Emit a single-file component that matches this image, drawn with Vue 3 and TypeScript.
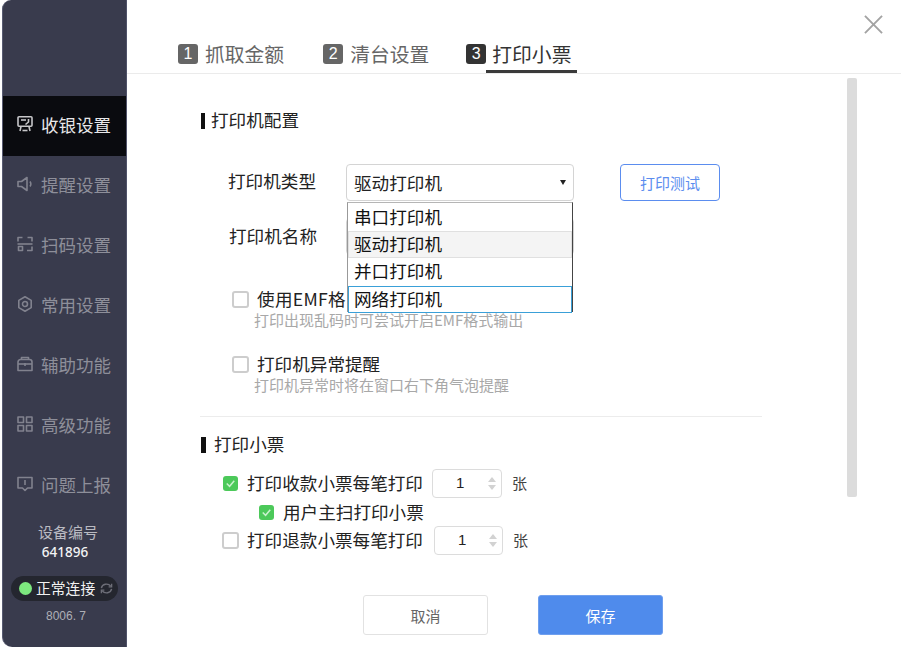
<template>
  <div class="window">
    <aside class="sidebar">
      <nav class="nav">
        <div
          v-for="item in navItems"
          :key="item.label"
          class="nav__item"
          :class="{ 'nav__item--active': item.active }">
          <svg class="nav__icon" viewBox="0 0 18 18" fill="none" stroke="currentColor" stroke-width="1.6" stroke-linejoin="round">
            <path v-for="d in item.paths" :key="d" :d="d" />
          </svg>
          <span>{{ item.label }}</span>
        </div>
      </nav>
      <div class="device">
        <div class="device__label">设备编号</div>
        <div class="device__code">641896</div>
        <div class="status">
          <span class="status__dot" />
          <span class="status__text">正常连接</span>
          <svg class="status__icon" viewBox="0 0 14 14" fill="none" stroke="currentColor" stroke-width="1.5">
            <path d="M1.500 6.500A5.500 5 0 0 1 11.500 4.500" />
            <path d="M12.500 2v3.200H9.300" />
            <path d="M12.500 7.500A5.500 5 0 0 1 2.500 9.500" />
            <path d="M1.500 12V8.800h3.200" />
          </svg>
        </div>
        <div class="device__version">8006. 7</div>
      </div>
    </aside>

    <main class="main">
      <svg class="close" viewBox="0 0 20 20" stroke="#a3a3a3" stroke-width="2" fill="none">
        <path d="M1 1l18 18M19 1L1 19" />
      </svg>

      <header class="tabs">
        <div
          v-for="tab in tabs"
          :key="tab.num"
          class="tab"
          :class="{ 'tab--active': tab.active }">
          <span class="tab__num">{{ tab.num }}</span>
          <span class="tab__text">{{ tab.label }}</span>
        </div>
      </header>

      <div class="thumb" />

      <section class="content">
        <h2 class="title">打印机配置</h2>

        <div class="field field--type">
          <label class="field__label">打印机类型</label>
          <div class="select">
            <span>驱动打印机</span>
            <span class="select__arrow" />
            <ul class="dropdown">
              <li
                v-for="opt in options"
                :key="opt.label"
                class="dropdown__opt"
                :class="{
                  'dropdown__opt--selected': opt.selected,
                  'dropdown__opt--focus': opt.focus,
                }">
                {{ opt.label }}
              </li>
            </ul>
          </div>
          <button class="btn-test">打印测试</button>
        </div>

        <div class="field field--name">
          <label class="field__label">打印机名称</label>
          <div class="select select--name" />
        </div>

        <div class="option option--emf">
          <span class="check" />
          <span class="option__text option__text--emf">使用EMF格</span>
        </div>
        <p class="hint">打印出现乱码时可尝试开启EMF格式输出</p>

        <div class="option option--warn">
          <span class="check" />
          <span class="option__text">打印机异常提醒</span>
        </div>
        <p class="hint">打印机异常时将在窗口右下角气泡提醒</p>

        <div class="divider" />

        <h2 class="title title--second">打印小票</h2>

        <div class="ticket ticket--first">
          <span class="check check--on">
            <svg viewBox="0 0 16 16" fill="none" stroke="#c9f2cd" stroke-width="1.6"><path d="M4 8l3 3 5-6" /></svg>
          </span>
          <span class="option__text">打印收款小票每笔打印</span>
          <span class="stepper">
            <span class="stepper__val">1</span>
            <span class="stepper__arrows"><i class="up" /><i class="down" /></span>
          </span>
          <span class="ticket__unit">张</span>
        </div>
        <div class="ticket ticket--sub">
          <span class="check check--on">
            <svg viewBox="0 0 16 16" fill="none" stroke="#c9f2cd" stroke-width="1.6"><path d="M4 8l3 3 5-6" /></svg>
          </span>
          <span class="option__text">用户主扫打印小票</span>
        </div>
        <div class="ticket ticket--last">
          <span class="check" />
          <span class="option__text">打印退款小票每笔打印</span>
          <span class="stepper">
            <span class="stepper__val">1</span>
            <span class="stepper__arrows"><i class="up" /><i class="down" /></span>
          </span>
          <span class="ticket__unit">张</span>
        </div>
      </section>

      <footer class="footer">
        <button class="btn btn--cancel">取消</button>
        <button class="btn btn--save">保存</button>
      </footer>
    </main>
  </div>
</template>

<script setup lang="ts">
interface NavItem {
  label: string;
  paths: string[];
  active?: boolean;
}

const navItems: NavItem[] = [
  {
    label: "收银设置",
    active: true,
    paths: [
      "M3 1.800h12a1 1 0 0 1 1 1v7.400a1 1 0 0 1-1 1H3a1 1 0 0 1-1-1V2.800a1 1 0 0 1 1-1z",
      "M5 11.500l-1 4.500",
      "M13 11.500l1 4.500",
      "M6.500 15.500h5",
      "M5 5h5",
      "M12.500 4v3l-3 2.500",
    ],
  },
  {
    label: "提醒设置",
    paths: ["M2 6.500h3.500L11 2.500v13l-5.500-4H2z", "M14 6.500c1 1.500 1 3.500 0 5"],
  },
  {
    label: "扫码设置",
    paths: [
      "M2 6.500V2.500h4.500",
      "M11.500 2.500H16v4",
      "M1.500 9h15",
      "M2.500 11.500h4v4h-4z",
      "M16 11.500v4h-5",
    ],
  },
  {
    label: "常用设置",
    paths: [
      "M9 1.800l6.200 3.600v7.200L9 16.200l-6.200-3.600V5.400z",
      "M9 6.500a2.500 2.500 0 1 0 0 5 2.500 2.500 0 0 0 0-5z",
    ],
  },
  {
    label: "辅助功能",
    paths: [
      "M2 7a2.500 2.500 0 0 1 2.500-2.500h9A2.500 2.500 0 0 1 16 7v8.500H2z",
      "M5.500 4.500V2.500h7v2",
      "M2 9h14",
      "M9 8v3",
    ],
  },
  {
    label: "高级功能",
    paths: ["M2 2h5.500v5.500H2z", "M10.500 2H16v5.500h-5.500z", "M2 10.500h5.500V16H2z", "M10.500 10.500H16V16h-5.500z"],
  },
  {
    label: "问题上报",
    paths: ["M2 2.500h14v10.500h-4.500L9 15.500 6.500 13H2z", "M9 5v5"],
  },
];

const tabs = [
  { num: 1, label: "抓取金额" },
  { num: 2, label: "清台设置" },
  { num: 3, label: "打印小票", active: true },
];

const options = [
  { label: "串口打印机" },
  { label: "驱动打印机", selected: true },
  { label: "并口打印机" },
  { label: "网络打印机", focus: true },
];
</script>

<style>
html,
body {
  margin: 0;
  background: #fff;
}
</style>

<style scoped>
.window {
  display: flex;
  width: 901px;
  height: 647px;
  overflow: hidden;
  font-family: "Noto Sans CJK SC", "Liberation Sans", sans-serif;
  color: #222;
  background: #fff;
}

.sidebar {
  flex: none;
  display: flex;
  flex-direction: column;
  box-sizing: border-box;
  width: 125px;
  margin-left: 2px;
  padding: 96px 0 0;
  background: #393b4d;
  border-left: 1px solid #585b72;
  border-right: 1px solid #50536a;
  border-radius: 9px 0 0 10px;
}

.nav__item {
  display: flex;
  align-items: center;
  gap: 7px;
  box-sizing: border-box;
  height: 60px;
  padding: 0 0 4px 13px;
  font-size: 17.500px;
  color: #8e8f9a;
}

.nav__item--active {
  color: #e8e8ea;
  background: #0a0b0f;
}

.nav__icon {
  flex: none;
  width: 18px;
  height: 18px;
  opacity: 0.85;
}

.device {
  display: flex;
  flex-direction: column;
  align-items: center;
  margin-top: 6px;
}

.device__label {
  margin-left: 7px;
  font-size: 15px;
  line-height: 20px;
  color: #b9bac1;
}

.device__code {
  margin-left: 1px;
  font-family: "Noto Sans", "Liberation Sans", sans-serif;
  font-size: 13.500px;
  line-height: 20px;
  font-weight: 500;
  color: #f4f4f5;
}

.status {
  display: flex;
  align-items: center;
  box-sizing: border-box;
  width: 107px;
  height: 25px;
  margin: 14px 0 0;
  padding-left: 8px;
  background: #24262f;
  border-radius: 13px;
}

.status__dot {
  flex: none;
  width: 13px;
  height: 13px;
  border-radius: 50%;
  background: #7de87f;
}

.status__text {
  margin-left: 4px;
  padding-bottom: 2px;
  font-size: 14.800px;
  color: #f2f2f2;
  white-space: nowrap;
}

.status__icon {
  flex: none;
  width: 13px;
  height: 13px;
  margin-left: 5px;
  color: #6d6e78;
}

.device__version {
  margin: 6px 0 0 3px;
  font-family: "Liberation Sans", sans-serif;
  font-size: 12px;
  line-height: 18px;
  color: #aeafb6;
}

.main {
  position: relative;
  flex: 1;
  display: flex;
  flex-direction: column;
  min-width: 0;
}

.close {
  position: absolute;
  top: 15px;
  right: 18px;
  width: 19px;
  height: 19px;
}

.tabs {
  flex: none;
  display: flex;
  align-items: flex-start;
  box-sizing: border-box;
  height: 74px;
  padding: 39px 0 0 51px;
  border-bottom: 1px solid #ebebeb;
}

.tab {
  display: flex;
  align-items: center;
  box-sizing: border-box;
  height: 34px;
  margin-right: 39px;
  padding-bottom: 4px;
  color: #666;
}

.tab:nth-child(2) {
  margin-right: 37px;
}

.tab__num {
  display: flex;
  align-items: center;
  justify-content: center;
  width: 20px;
  height: 20px;
  margin-right: 7px;
  font-family: "Liberation Sans", sans-serif;
  font-size: 16px;
  color: #fff;
  background: #666;
  border-radius: 3px;
}

.tab__text {
  font-size: 19.800px;
  line-height: 28px;
}

.tab--active {
  position: relative;
  margin-right: 0;
  color: #333;
}

.tab--active .tab__num {
  margin-right: 6px;
  background: #333;
}

.tab--active::after {
  content: "";
  position: absolute;
  left: 20px;
  right: -6px;
  bottom: 0;
  height: 3px;
  background: #3a3a3a;
}

.thumb {
  position: absolute;
  top: 78px;
  right: 44px;
  width: 10px;
  height: 419px;
  background: #dcdcdc;
  border-radius: 2px;
}

.content {
  flex: 1;
  display: flex;
  flex-direction: column;
  align-items: flex-start;
  padding: 34px 0 0 73px;
  font-size: 17.600px;
}

.title {
  display: flex;
  align-items: center;
  height: 24px;
  margin: 0;
  font-size: 17.600px;
  font-weight: 400;
  line-height: 24px;
  color: #222;
}

.title::before {
  content: "";
  width: 4px;
  height: 16px;
  margin: 2px 6px 0 1px;
  background: #111;
}

.title--second::before {
  width: 5px;
  margin-right: 8px;
}

.field {
  display: flex;
  align-items: center;
  line-height: 24px;
}

.field--type {
  margin: 32px 0 0 28px;
}

.field--name {
  margin: 17px 0 0 29px;
}

.field__label {
  width: 118px;
}

.field--type .field__label {
  margin-bottom: 4px;
}

.field--name .field__label {
  margin-bottom: 2px;
}

.select {
  position: relative;
  display: flex;
  align-items: center;
  box-sizing: border-box;
  width: 228px;
  height: 37px;
  padding-left: 7px;
  background: #fff;
  border: 1px solid #d4d4d4;
  border-radius: 4px;
}

.select--name {
  margin-left: -1px;
}

.select__arrow {
  position: absolute;
  top: 15px;
  right: 7px;
  border-top: 5px solid #222;
  border-left: 3px solid transparent;
  border-right: 3px solid transparent;
}

.dropdown {
  position: absolute;
  z-index: 2;
  top: 37px;
  left: 0;
  box-sizing: border-box;
  width: 226px;
  height: 110px;
  margin: 0;
  padding: 1px 0 0;
  list-style: none;
  background: #fff;
  border-top: 1px solid #b5b5b5;
  border-left: 1px solid #999;
  border-right: 1px solid #444;
}

.dropdown__opt {
  box-sizing: border-box;
  height: 27px;
  padding-left: 5px;
  font-size: 17.600px;
  line-height: 23px;
  color: #111;
  border: 1px solid transparent;
}

.dropdown__opt--selected {
  background: #f4f4f4;
  border-color: #e0e0e0;
}

.dropdown__opt--focus {
  margin-top: 1px;
  border-color: #3aa0d8;
}

.btn-test {
  box-sizing: border-box;
  width: 100px;
  height: 37px;
  margin-left: 46px;
  font-family: inherit;
  font-size: 15px;
  color: #5b8def;
  background: #fff;
  border: 1px solid #5b8def;
  border-radius: 4px;
}

.option {
  display: flex;
  align-items: center;
  margin-left: 32px;
  line-height: 24px;
}

.option--emf {
  margin-top: 32px;
}

.option--warn {
  margin-top: 23px;
}

.option__text {
  margin-left: 8px;
  white-space: nowrap;
}

.option__text--emf {
  letter-spacing: 0.300px;
}

.check {
  flex: none;
  display: block;
  box-sizing: border-box;
  width: 17px;
  height: 17px;
  background: #fff;
  border: 2px solid #cdcdcd;
  border-radius: 3px;
}

.check--on {
  width: 15px;
  height: 15px;
  background: #4cc95a;
  border: none;
}

.check--on + .option__text {
  margin-left: 9px;
}

.check--on svg {
  display: block;
  width: 15px;
  height: 15px;
}

.hint {
  margin: -1px 0 0 54px;
  font-size: 15px;
  line-height: 19px;
  color: #a8a8a8;
  white-space: nowrap;
}

.divider {
  width: 562px;
  height: 1px;
  margin-top: 22px;
  background: #ececec;
}

.title--second {
  margin-top: 15px;
}

.ticket {
  display: flex;
  align-items: center;
  line-height: 24px;
}

.ticket--first {
  height: 28px;
  margin: 13px 0 0 23px;
}

.ticket--sub {
  height: 28px;
  margin: 1px 0 0 59px;
}

.ticket--last {
  height: 28px;
  margin: 0 0 0 22px;
}

.stepper {
  display: flex;
  align-items: center;
  justify-content: space-between;
  box-sizing: border-box;
  width: 70px;
  height: 29px;
  margin-left: 9px;
  padding: 0 5px 0 23px;
  font-family: "Liberation Sans", sans-serif;
  font-size: 15px;
  background: #fff;
  border: 1px solid #dcdcdc;
  border-radius: 4px;
}

.ticket--last .stepper {
  width: 69px;
  margin-left: 11px;
}

.stepper__val {
  color: #222;
}

.stepper__arrows {
  display: flex;
  flex-direction: column;
  gap: 3px;
}

.stepper__arrows i {
  display: block;
  border-left: 4px solid transparent;
  border-right: 4px solid transparent;
}

.stepper__arrows .up {
  border-bottom: 5px solid #d2d2d2;
}

.stepper__arrows .down {
  border-top: 5px solid #d2d2d2;
}

.ticket__unit {
  margin-left: 10px;
  font-size: 15px;
  color: #444;
}

.footer {
  flex: none;
  display: flex;
  gap: 50px;
  padding: 0 0 12px 236px;
}

.btn {
  box-sizing: border-box;
  width: 125px;
  height: 40px;
  font-family: inherit;
  font-size: 15px;
  border-radius: 3px;
}

.btn--cancel {
  color: #666;
  background: #fff;
  border: 1px solid #e2e2e2;
}

.btn--save {
  color: #fff;
  background: #4f8bec;
  border: 1px solid #6f9fee;
}
</style>
